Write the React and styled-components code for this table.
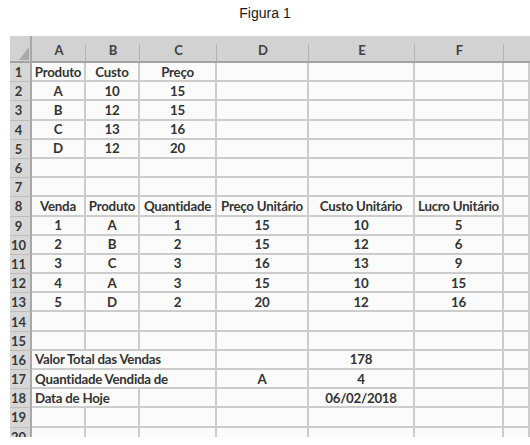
import React from "react";
import styled, { createGlobalStyle } from "styled-components";

const Global = createGlobalStyle`
  html, body { margin: 0; padding: 0; background: #ffffff; }
  body { width: 530px; height: 445px; overflow: hidden; }
`;

const Page = styled.div`
  width: 530px;
  height: 445px;
  display: flex;
  flex-direction: column;
  background: #fff;
`;

const Title = styled.div`
  height: 36px;
  display: flex;
  justify-content: center;
  padding-top: 5px;
  box-sizing: border-box;
  font-family: "Liberation Sans", Arial, sans-serif;
  font-size: 14px;
  color: #1a1a1a;
`;

const Clip = styled.div`
  margin-left: 10px;
  height: 401px;
  overflow: hidden;
`;

const Sheet = styled.div`
  display: grid;
  grid-template-columns: 22px 54px 54px 77px 92px 106px 89px 26px;
  grid-template-rows: 27px repeat(20, 19.2px);
  font-family: "Lato", "Open Sans", sans-serif;
  color: #333;
`;

const ColHead = styled.div`
  background: #d2d2d2;
  border-bottom: 2px solid #a3a3a3;
  box-sizing: border-box;
  display: flex;
  align-items: flex-end;
  justify-content: center;
  padding-bottom: 3px;
  font-size: 13px;
  font-weight: 700;
  color: #404040;
  position: relative;
  &::after {
    content: "";
    position: absolute;
    right: 0;
    top: 8px;
    bottom: 0;
    width: 1px;
    background: ${(p) => (p.$last ? "transparent" : "#b3b3b3")};
  }
`;

const Corner = styled.div`
  background: #d2d2d2;
  border-bottom: 2px solid #a3a3a3;
  border-right: 2px solid #a8a8a8;
  box-sizing: border-box;
  display: flex;
  align-items: flex-end;
  justify-content: flex-end;
  padding: 0 1px 1px 0;
`;

const RowHead = styled.div`
  background: #d7d7d7;
  border-right: 2px solid #a8a8a8;
  border-bottom: 1px solid #bdbdbd;
  box-sizing: border-box;
  display: flex;
  align-items: center;
  justify-content: center;
  padding-right: 3px;
  font-size: 13px;
  font-weight: 700;
  color: #383838;
`;

const Cell = styled.div`
  background: #fbfbfb;
  border-right: 2px solid #cccccc;
  border-bottom: 2px solid #cccccc;
  box-sizing: border-box;
  display: flex;
  align-items: center;
  justify-content: ${(p) => (p.$left ? "flex-start" : "center")};
  padding-left: ${(p) => (p.$left ? "3px" : "0")};
  grid-column: span ${(p) => p.$span || 1};
  font-size: 13.3px;
  font-weight: 700;
  white-space: nowrap;
  overflow: visible;
  letter-spacing: -0.25px;
`;

const letters = ["A", "B", "C", "D", "E", "F", ""];

const R = (...vals) => vals.map((v) => (typeof v === "string" ? { t: v } : v));
const empty = () => R("", "", "", "", "", "", "");

const rows = [
  R("Produto", "Custo", "Preço", "", "", "", ""),
  R("A", "10", "15", "", "", "", ""),
  R("B", "12", "15", "", "", "", ""),
  R("C", "13", "16", "", "", "", ""),
  R("D", "12", "20", "", "", "", ""),
  empty(),
  empty(),
  R("Venda", "Produto", "Quantidade", "Preço Unitário", "Custo Unitário", "Lucro Unitário", ""),
  R("1", "A", "1", "15", "10", "5", ""),
  R("2", "B", "2", "15", "12", "6", ""),
  R("3", "C", "3", "16", "13", "9", ""),
  R("4", "A", "3", "15", "10", "15", ""),
  R("5", "D", "2", "20", "12", "16", ""),
  empty(),
  empty(),
  R({ t: "Valor Total das Vendas", span: 3, left: true }, "", "178", "", ""),
  R({ t: "Quantidade Vendida de", span: 3, left: true }, "A", "4", "", ""),
  R({ t: "Data de Hoje", span: 2, left: true }, "", "", "06/02/2018", "", ""),
  empty(),
  empty(),
];

function CornerMark() {
  return (
    <svg width="10" height="13" viewBox="0 0 10 13">
      <polygon points="10,0 10,13 0,13" fill="#a9a9a9" />
    </svg>
  );
}

export default function App() {
  return (
    <Page>
      <Global />
      <Title>Figura 1</Title>
      <Clip>
        <Sheet>
          <Corner>
            <CornerMark />
          </Corner>
          {letters.map((l, i) => (
            <ColHead key={i} $last={i === letters.length - 1}>
              {l}
            </ColHead>
          ))}
          {rows.map((row, ri) => (
            <React.Fragment key={ri}>
              <RowHead>{ri + 1}</RowHead>
              {row.map((c, ci) => (
                <Cell key={ci} $span={c.span} $left={c.left}>
                  {c.t}
                </Cell>
              ))}
            </React.Fragment>
          ))}
        </Sheet>
      </Clip>
    </Page>
  );
}
